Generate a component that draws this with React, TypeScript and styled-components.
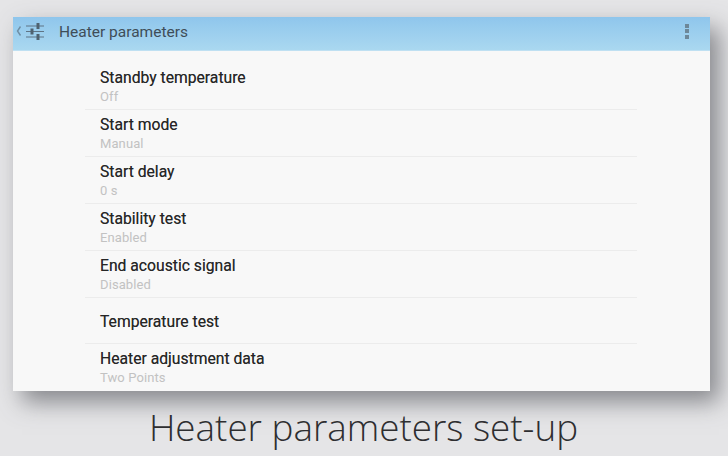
import styled, { createGlobalStyle } from 'styled-components';

const GlobalStyle = createGlobalStyle`
  html, body {
    margin: 0;
    padding: 0;
    background: #e5e5e7;
  }
`;

const Page = styled.div`
  width: 728px;
  height: 456px;
  overflow: hidden;
  padding: 17px 18px 0 13px;
  box-sizing: border-box;
  display: flex;
  flex-direction: column;
`;

const Panel = styled.div`
  height: 374px;
  flex-shrink: 0;
  background: #f8f8f8;
  overflow: hidden;
`;

const Shadow = styled.div`
  box-shadow: 9px 11px 22px 0 rgba(90, 92, 98, 0.68);
`;

const Header = styled.header`
  height: 34px;
  display: flex;
  align-items: center;
  padding: 0 21px 0 3px;
  background: linear-gradient(#8fc6ec, #aad8f0);
  border-bottom: 1px solid #bfe0f2;
  box-sizing: border-box;
`;

const BackIcon = styled.svg`
  width: 6px;
  height: 12px;
  margin-right: 3px;
  margin-bottom: 5px;
`;

const TuneIcon = styled.svg`
  width: 19px;
  height: 19px;
  margin-bottom: 5px;
`;

const HeaderTitle = styled.h1`
  margin: 0 0 3px 15px;
  flex: 1;
  font: 400 15.5px Roboto, sans-serif;
  color: #3f4d58;
`;

const MenuDots = styled.div`
  display: flex;
  flex-direction: column;
  gap: 1.5px;
  margin-bottom: 5px;
`;

const Dot = styled.span`
  width: 4px;
  height: 4px;
  background: #6d8798;
`;

const List = styled.div`
  width: 552px;
  margin-left: 72px;
  padding-top: 12px;
`;

const Row = styled.div<{ $single?: boolean; $last?: boolean }>`
  height: ${(p) => (p.$single ? 46 : 47)}px;
  padding-left: 15px;
  box-sizing: border-box;
  border-bottom: 1px solid ${(p) => (p.$last ? 'transparent' : '#ececec')};
  display: flex;
  flex-direction: column;
  justify-content: ${(p) => (p.$single ? 'center' : 'flex-start')};
  padding-top: ${(p) => (p.$single ? 2 : 5)}px;
`;

const RowTitle = styled.div`
  font: 400 15.7px/20px Roboto, sans-serif;
  color: #262626;
  text-shadow: 0 0 0.6px rgba(38, 38, 38, 0.6);
`;

const RowValue = styled.div`
  font: 400 13px/18px Roboto, sans-serif;
  color: #c2c2c2;
  letter-spacing: 0.1px;
`;

const Caption = styled.div`
  margin-top: 11px;
  padding-left: 4px;
  text-align: center;
  font: 300 36.8px/50px 'Open Sans', sans-serif;
  color: #2e2e30;
`;

const rows = [
  { title: 'Standby temperature', value: 'Off' },
  { title: 'Start mode', value: 'Manual' },
  { title: 'Start delay', value: '0 s' },
  { title: 'Stability test', value: 'Enabled' },
  { title: 'End acoustic signal', value: 'Disabled' },
  { title: 'Temperature test' },
  { title: 'Heater adjustment data', value: 'Two Points' },
];

function App() {
  return (
    <Page>
      <GlobalStyle />
      <Shadow>
        <Panel>
          <Header>
            <BackIcon viewBox="0 0 6 12" fill="none" stroke="#6f8ea4" strokeWidth="1.4">
              <path d="M4.5 1.5L1.5 6L4.5 10.5" />
            </BackIcon>
            <TuneIcon viewBox="0 0 19 19" fill="none" stroke="#5f7485" strokeWidth="1.2">
              <path d="M1 4h18M1 9.5h18M1 15h18" />
              <path d="M13 1v6M7 6.5v6M13 12v6" stroke="#4f6270" strokeWidth="3" />
            </TuneIcon>
            <HeaderTitle>Heater parameters</HeaderTitle>
            <MenuDots>
              <Dot />
              <Dot />
              <Dot />
            </MenuDots>
          </Header>
          <List>
            {rows.map((row, i) => (
              <Row key={row.title} $single={!row.value} $last={i === rows.length - 1}>
                <RowTitle>{row.title}</RowTitle>
                {row.value && <RowValue>{row.value}</RowValue>}
              </Row>
            ))}
          </List>
        </Panel>
      </Shadow>
      <Caption>Heater parameters set-up</Caption>
    </Page>
  );
}

export default App;
